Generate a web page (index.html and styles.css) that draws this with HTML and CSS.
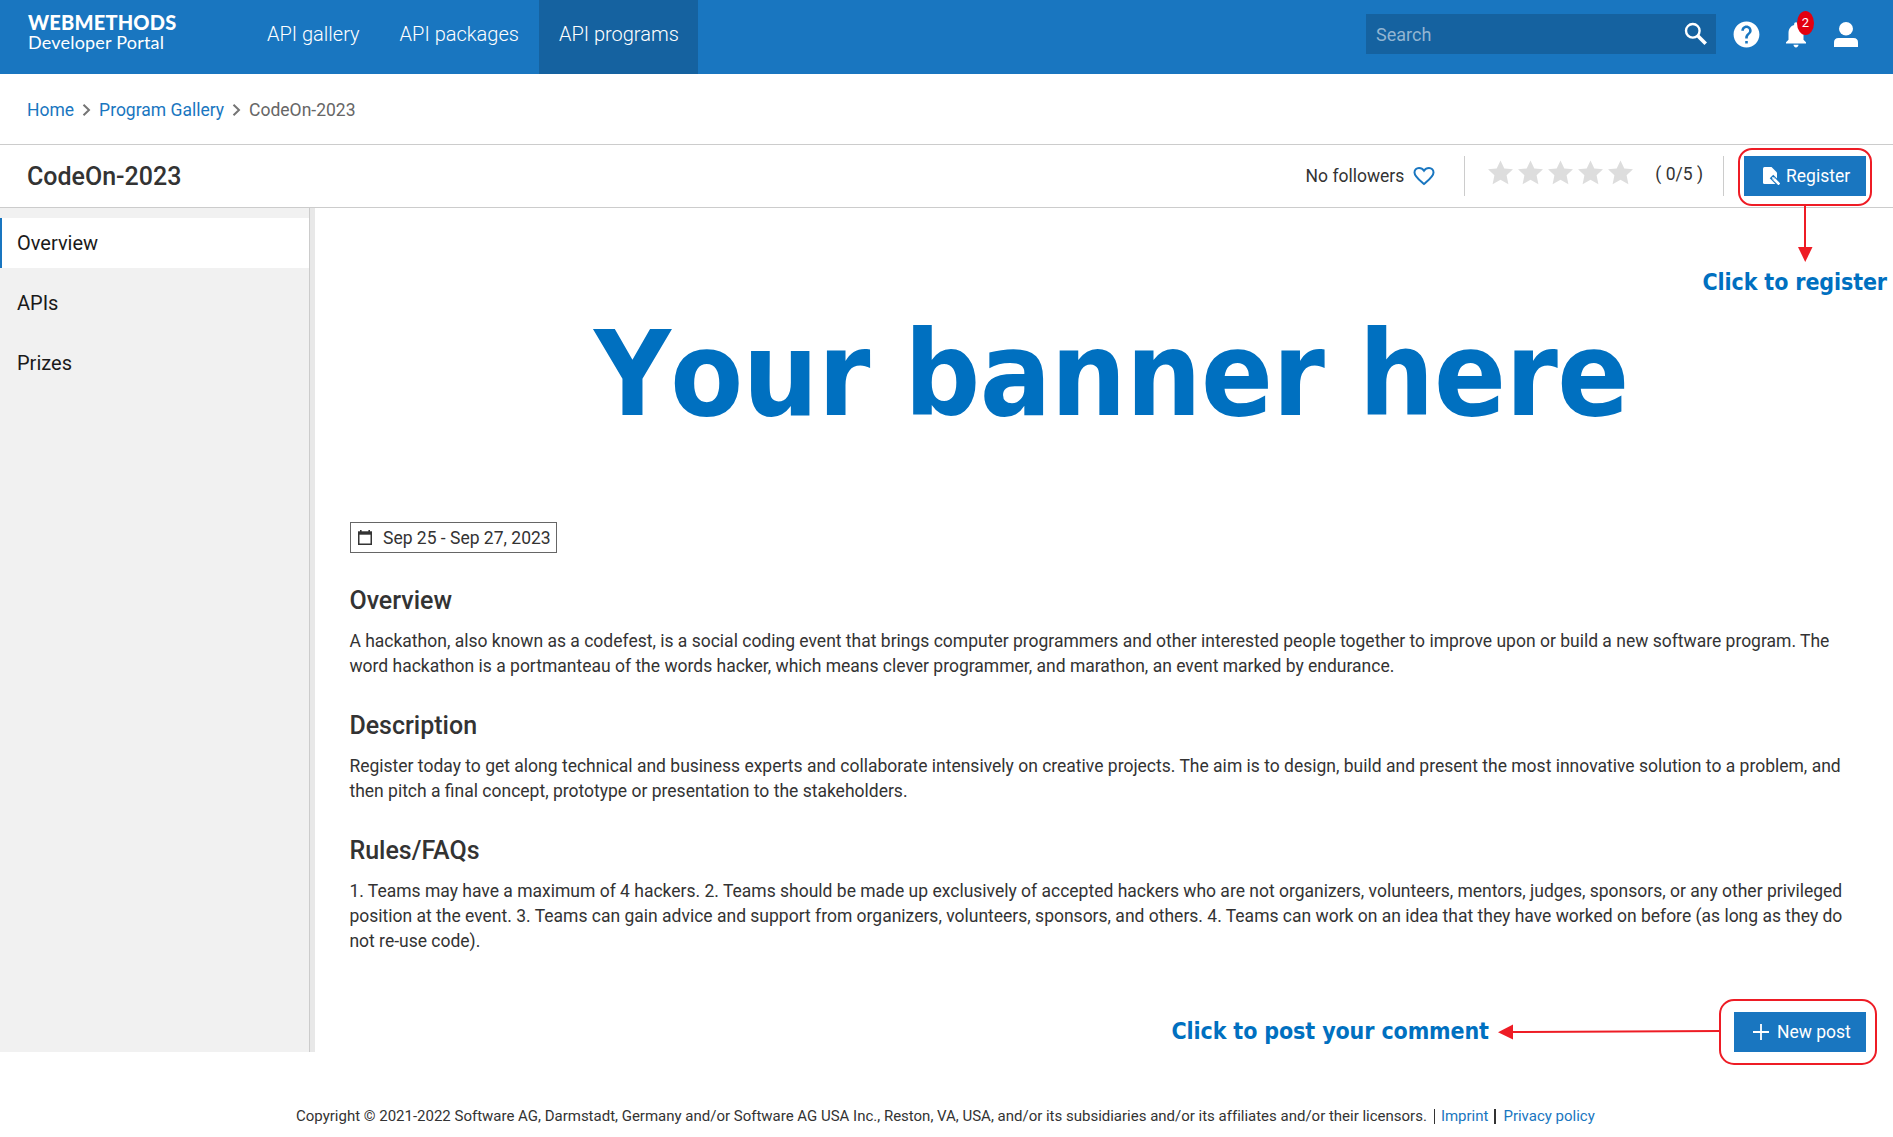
FILE: index.html
```html
<!DOCTYPE html>
<html lang="en">
<head>
<meta charset="utf-8">
<title>CodeOn-2023 - Developer Portal</title>
<link rel="stylesheet" href="styles.css">
</head>
<body>
<header class="topbar">
  <a class="logo"><span class="logo-name">WEBMETHODS</span><span class="logo-sub">Developer Portal</span></a>
  <nav class="nav">
    <a class="nav-item"><span>API gallery</span></a>
    <a class="nav-item"><span>API packages</span></a>
    <a class="nav-item active"><span>API programs</span></a>
  </nav>
  <div class="tools">
    <div class="search"><span>Search</span>
      <svg width="24" height="24" viewBox="0 0 24 24" fill="none" stroke="#fff"><circle cx="8.8" cy="8.8" r="6.8" stroke-width="2.4"/><path d="M14 14l7.7 7.7" stroke-width="3.6"/></svg>
    </div>
    <svg class="help" width="31" height="31" viewBox="0 0 24 24" fill="#fff"><path d="M12 2C6.48 2 2 6.48 2 12s4.48 10 10 10 10-4.48 10-10S17.52 2 12 2zm1 17h-2v-2h2v2zm2.07-7.75l-.9.92C13.45 12.9 13 13.5 13 15h-2v-.5c0-1.1.45-2.1 1.17-2.83l1.24-1.26c.37-.36.59-.86.59-1.41 0-1.1-.9-2-2-2s-2 .9-2 2H8c0-2.21 1.79-4 4-4s4 1.79 4 4c0 .88-.36 1.68-.93 2.25z"/></svg>
    <div class="bell">
      <svg width="30" height="31" viewBox="0 0 24 24" fill="#fff" preserveAspectRatio="none"><path d="M12 22c1.1 0 2-.9 2-2h-4c0 1.1.89 2 2 2zm6-6v-5c0-3.07-1.64-5.64-4.5-6.32V4c0-.83-.67-1.5-1.5-1.5s-1.5.67-1.5 1.5v.68C7.63 5.36 6 7.92 6 11v5l-2 2v1h16v-1l-2-2z"/></svg>
      <span class="badge">2</span>
    </div>
    <svg class="user" width="24" height="25" viewBox="0 0 24 25" fill="#fff"><ellipse cx="12" cy="6.8" rx="7" ry="6.8"/><path d="M0 25v-4.500C0 17.500 1.500 16 4.500 16h15c3 0 4.500 1.500 4.500 4.500V25z"/></svg>
  </div>
</header>
<div class="crumbs">
  <a>Home</a>
  <svg width="9" height="12" viewBox="0 0 9 12" fill="none" stroke="#757575" stroke-width="2"><path d="M1.500 .7L7 6l-5.500 5.300"/></svg>
  <a>Program Gallery</a>
  <svg width="9" height="12" viewBox="0 0 9 12" fill="none" stroke="#757575" stroke-width="2"><path d="M1.500 .7L7 6l-5.500 5.300"/></svg>
  <span>CodeOn-2023</span>
</div>
<section class="titlebar">
  <h1>CodeOn-2023</h1>
  <div class="followers"><span>No followers</span>
    <svg width="22" height="20" viewBox="0 0 22 20" fill="none" stroke="#1976c0" stroke-width="2"><path d="M11 18C6 13.600 1.500 10.500 1.500 6.500 1.500 3.800 3.500 2 6 2c2 0 3.800 1 5 2.800C12.200 3 14 2 16 2c2.500 0 4.500 1.800 4.500 4.500C20.500 10.500 16 13.600 11 18z"/></svg>
  </div>
  <div class="rating">
    <div class="stars">
      <svg viewBox="0 0 25 24"><path d="M12.500 0l3.800 7.900 8.700.9-6.400 6 1.800 9-7.900-4.600L4.600 23.800l1.800-9L0 8.800l8.700-.9z"/></svg>
      <svg viewBox="0 0 25 24"><path d="M12.500 0l3.800 7.900 8.700.9-6.400 6 1.800 9-7.900-4.600L4.600 23.800l1.800-9L0 8.800l8.700-.9z"/></svg>
      <svg viewBox="0 0 25 24"><path d="M12.500 0l3.800 7.900 8.700.9-6.400 6 1.800 9-7.900-4.600L4.600 23.800l1.800-9L0 8.800l8.700-.9z"/></svg>
      <svg viewBox="0 0 25 24"><path d="M12.500 0l3.800 7.900 8.700.9-6.400 6 1.800 9-7.900-4.600L4.600 23.800l1.800-9L0 8.800l8.700-.9z"/></svg>
      <svg viewBox="0 0 25 24"><path d="M12.500 0l3.800 7.900 8.700.9-6.400 6 1.800 9-7.900-4.600L4.600 23.800l1.800-9L0 8.800l8.700-.9z"/></svg>
    </div>
    <span class="score">( 0/5 )</span>
  </div>
  <button class="btn register">
    <svg width="17" height="18" viewBox="0 0 17 18"><path fill="#fff" d="M0 1.500Q0 0 1.500 0h7L14 5.500V17H1.500Q0 17 0 15.500z"/><path fill="none" stroke="#1976c0" stroke-width="5" d="M8.500 9.500l8 8"/><path fill="none" stroke="#fff" stroke-width="2.600" d="M11 12l5.400 5.400"/><path fill="#fff" d="M9 10l3.200.8-2.400 2.400z"/></svg>
    <span>Register</span>
  </button>
</section>
<main class="body">
  <aside class="side">
    <a class="side-item selected">Overview</a>
    <a class="side-item">APIs</a>
    <a class="side-item">Prizes</a>
  </aside>
  <article class="content">
    <div class="banner"><span>Your banner here</span></div>
    <div class="date">
      <svg width="14" height="15" viewBox="0 0 14 15" fill="none" stroke="#333"><path d="M.75 3.500V14.250h12.500V3.500" stroke-width="1.500"/><path d="M0 3h14" stroke-width="3.400"/><path d="M2.800 0v3M11.200 0v3" stroke-width="1.600"/></svg>
      <span>Sep 25 - Sep 27, 2023</span>
    </div>
    <h2>Overview</h2>
    <p>A hackathon, also known as a codefest, is a social coding event that brings computer programmers and other interested people together to improve upon or build a new software program. The<br>word hackathon is a portmanteau of the words hacker, which means clever programmer, and marathon, an event marked by endurance.</p>
    <h2>Description</h2>
    <p>Register today to get along technical and business experts and collaborate intensively on creative projects. The aim is to design, build and present the most innovative solution to a problem, and<br>then pitch a final concept, prototype or presentation to the stakeholders.</p>
    <h2>Rules/FAQs</h2>
    <p>1. Teams may have a maximum of 4 hackers. 2. Teams should be made up exclusively of accepted hackers who are not organizers, volunteers, mentors, judges, sponsors, or any other privileged<br>position at the event. 3. Teams can gain advice and support from organizers, volunteers, sponsors, and others. 4. Teams can work on an idea that they have worked on before (as long as they do<br>not re-use code).</p>
    <button class="btn post">
      <svg width="16" height="16" viewBox="0 0 16 16" stroke="#fff" stroke-width="1.800"><path d="M8 0v16M0 8h16"/></svg>
      <span>New post</span>
    </button>
  </article>
</main>
<footer class="footer">
  <span>Copyright © 2021-2022 Software AG, Darmstadt, Germany and/or Software AG USA Inc., Reston, VA, USA, and/or its subsidiaries and/or its affiliates and/or their licensors.</span>
  <i class="bar"></i><a>Imprint</a><i class="bar thick"></i><a>Privacy policy</a>
</footer>
<svg class="callouts" width="1893" height="1137" viewBox="0 0 1893 1137" fill="none" stroke="#ee1c25" stroke-width="2">
  <rect x="1739" y="149" width="132" height="56" rx="13"/>
  <path d="M1805 206v44"/><path d="M1798 247h14.500l-7.250 15z" fill="#ee1c25" stroke="none"/>
  <rect x="1720" y="1000" width="156" height="64" rx="14"/>
  <path d="M1720 1031l-210 1"/><path d="M1513 1024.500v15l-15-7.200z" fill="#ee1c25" stroke="none"/>
</svg>
<span class="note note-register">Click to register</span>
<span class="note note-post">Click to post your comment</span>
</body>
</html>
```
FILE: styles.css
```css
* { box-sizing: border-box; }
body { margin: 0; width: 1893px; height: 1137px; position: relative; overflow: hidden; background: #fff; color: #333; font: 17.5px/25px Roboto, sans-serif; }
svg { display: block; flex: none; }
span, a { white-space: nowrap; }
.topbar { height: 74px; background: #1976c0; display: flex; color: #fff; }
.logo { width: 247px; padding: 12px 0 0 28px; font-family: Lato, sans-serif; display: flex; flex-direction: column; align-items: flex-start; }
.logo-name { font-size: 20px; font-weight: 900; line-height: 21px; letter-spacing: .2px; }
.logo-sub { font-size: 18px; line-height: 19px; letter-spacing: .2px; }
.nav { display: flex; font-size: 20px; font-weight: 300; }
.nav-item { padding: 0 20px; line-height: 68px; }
.nav-item.active { background: #1562a0; padding-right: 19px; }
.tools { margin-left: auto; display: flex; padding-right: 35px; height: 68px; align-items: center; }
.search { width: 350px; height: 40px; background: #1562a0; color: #92b5d2; display: flex; align-items: center; justify-content: space-between; padding: 0 8px 0 10px; font-size: 18px; }
.help { margin-left: 15px; }
.bell { position: relative; margin-left: 19px; }
.badge { position: absolute; left: 16px; top: -8px; width: 17px; height: 24px; border-radius: 50%; background: #e2000f; font-size: 13px; line-height: 23px; text-align: center; }
.user { margin-left: 23px; }
.crumbs { height: 71px; border-bottom: 1px solid #ccc; padding: 2px 0 0 27px; display: flex; align-items: center; gap: 8px; color: #666; }
.crumbs svg { margin-top: -1px; }
.crumbs a, .footer a { color: #1976c0; }
.titlebar { height: 63px; border-bottom: 1px solid #ccc; display: flex; align-items: center; padding: 0 27px; }
h1, h2 { font-size: 25px; font-weight: 500; line-height: 30px; margin: 0; }
h1 { padding-top: 2px; }
.followers { margin-left: auto; display: flex; align-items: center; gap: 9px; padding-right: 29px; }
.rating { border-left: 1px solid #ccc; border-right: 1px solid #ccc; height: 40px; display: flex; padding: 0 20px 0 23px; align-items: center; }
.stars { display: flex; gap: 5px; padding-bottom: 7px; }
.stars svg { width: 25px; height: 25px; fill: #ddd; }
.score { margin-left: 22px; padding-bottom: 3px; }
.btn { border: 0; background: #1976c0; color: #fff; height: 40px; display: flex; align-items: center; font: 17.5px/25px Roboto, sans-serif; padding: 0 0 0 19px; }
.register { width: 122px; margin-left: 20px; gap: 6px; }
.register span { padding-top: 1px; }
.body { display: flex; height: 844px; }
.side { flex: none; width: 315px; background: #f1f1f1; border-right: 5px solid #e8e8e8; box-shadow: inset -1px 0 #ccc; padding-top: 10px; display: flex; flex-direction: column; gap: 10px; font-size: 20px; color: #1a1a1a; }
.side-item { height: 50px; line-height: 50px; padding-left: 17px; margin-right: 1px; }
.selected { background: #fff; border-left: 2px solid #1976c0; padding-left: 15px; }
.content { flex: 1; min-width: 0; padding: 0 27px 0 35px; display: flex; flex-direction: column; align-items: flex-start; }
.banner { height: 314px; align-self: stretch; padding: 96px 0 0 244px; color: #0070c0; font: bold 118px/140px "DejaVu Sans Condensed", sans-serif; font-kerning: none; letter-spacing: -.5px; word-spacing: -2px; }
.date { width: 207px; height: 31px; border: 1px solid #666; display: flex; align-items: center; gap: 11px; padding-left: 7px; }
.date span { padding-top: 2px; }
h2 { margin: 33px 0 0 -.6px; }
p { margin: 13px 0 -3px -.6px; height: 52px; white-space: nowrap; }
p:last-of-type { height: 75px; }
.post { width: 132px; margin: 61px 0 0; align-self: flex-end; gap: 8px; }
.footer { display: flex; align-items: center; height: 24px; margin-top: 52px; padding-left: 296px; font-size: 15px; line-height: 24px; letter-spacing: -.005px; }
.bar { width: 1px; height: 15px; background: #333; margin: 0 6px 0 7px; }
.thick { width: 2px; margin: 0 7px 0 6px; }
.callouts { position: absolute; left: 0; top: 0; pointer-events: none; }
.note { position: absolute; color: #0070c0; font: bold 23px/30px "DejaVu Sans Condensed", sans-serif; letter-spacing: -.12px; }
.note-register { left: 1702.5px; top: 267px; }
.note-post { left: 1171.5px; top: 1016px; }
```
